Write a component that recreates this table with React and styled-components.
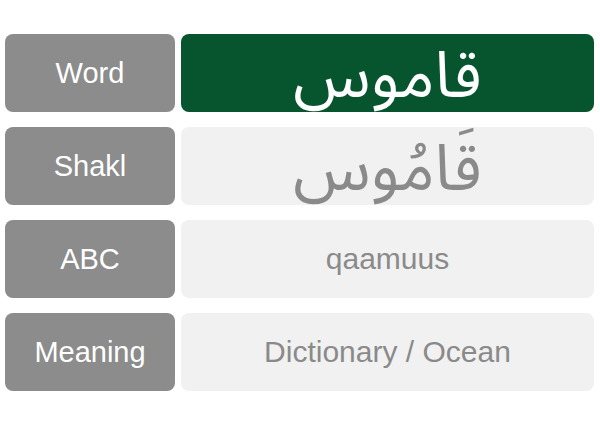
import styled, { createGlobalStyle } from "styled-components";

const Global = createGlobalStyle`
  body {
    margin: 0;
    background: #ffffff;
    font-family: "Liberation Sans", Arial, sans-serif;
  }
`;

const rows = [
  { label: "Word", value: "قاموس", kind: "arabic", active: true },
  { label: "Shakl", value: "قَامُوس", kind: "arabic" },
  { label: "ABC", value: "qaamuus", kind: "latin" },
  { label: "Meaning", value: "Dictionary / Ocean", kind: "latin" },
];

const App = () => {
  return (
    <>
      <Global />
      <Card>
        {rows.map((r) => (
          <Row key={r.label}>
            <Label>{r.label}</Label>
            <Value active={r.active} kind={r.kind} dir={r.kind === "arabic" ? "rtl" : "ltr"}>
              {r.value}
            </Value>
          </Row>
        ))}
      </Card>
    </>
  );
};

const Card = styled.div`
  display: flex;
  flex-direction: column;
  gap: 15px;
  padding: 34px 6px 0 5px;
`;

const Row = styled.div`
  display: grid;
  grid-template-columns: 170px 1fr;
  grid-template-rows: 78px;
  gap: 6px;
  height: 78px;
`;

const Label = styled.div`
  display: flex;
  align-items: center;
  justify-content: center;
  background: #8c8c8c;
  border-radius: 8px;
  color: #ffffff;
  font-size: 29px;
  line-height: 1;
`;

const Value = styled.div`
  display: flex;
  align-items: center;
  justify-content: center;
  border-radius: 8px;
  line-height: 1;
  padding-top: ${(p) => (p.kind === "arabic" ? "8px" : "0")};
  background: ${(p) => (p.active ? "#07552f" : "#f1f1f1")};
  color: ${(p) => (p.active ? "#ffffff" : "#8a8a8a")};
  font-family: ${(p) =>
    p.kind === "arabic"
      ? `"Noto Sans Arabic", "DejaVu Sans", sans-serif`
      : `"Liberation Sans", Arial, sans-serif`};
  font-size: ${(p) => (p.kind === "arabic" ? "64px" : "30px")};
`;

export default App;
